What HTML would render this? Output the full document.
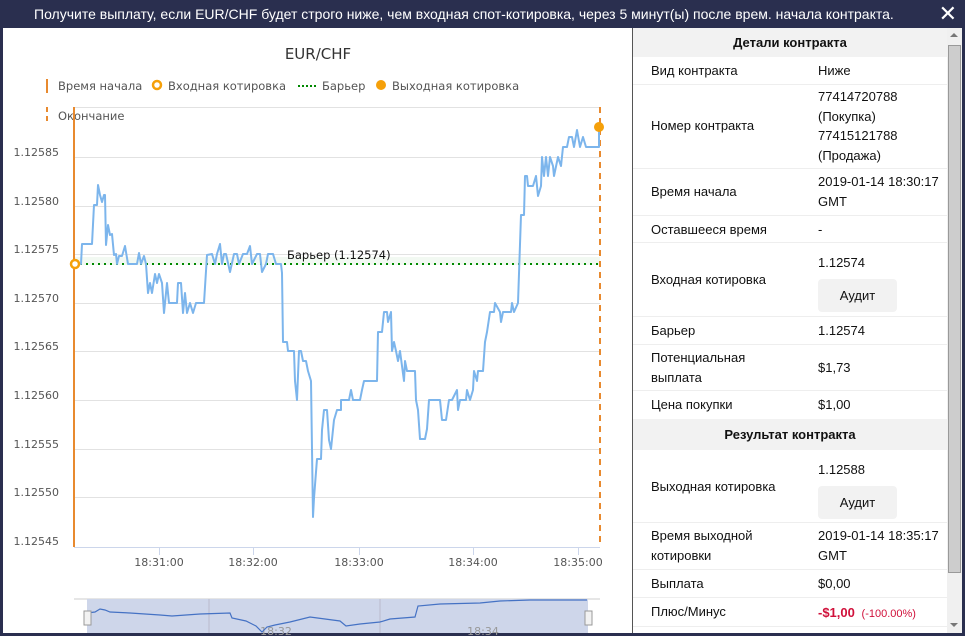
<!DOCTYPE html>
<html><head><meta charset="utf-8"><style>
*{margin:0;padding:0;box-sizing:border-box}
body{width:965px;height:636px;background:#2a2f4f;position:relative;overflow:hidden;font-family:"Liberation Sans",sans-serif}
#top{position:absolute;left:0;top:0;width:965px;height:28px;background:#2a2f4f;color:#fff;font-size:14px;line-height:28px;padding-left:34px;white-space:nowrap}
#close{position:absolute;right:8px;top:0;color:#fff;font-size:22px;line-height:28px}
#main{position:absolute;left:3px;top:28px;width:959px;height:605px;background:#fff}
#panel{position:absolute;left:632px;top:28px;width:315px;height:605px;border-left:1px solid #555;background:#fff;font-size:13px;color:#111}
.h{height:29px;background:#f2f2f2;text-align:center;font-weight:bold;line-height:29px}
.r{position:relative;border-bottom:1px solid #eee}
.r .l{position:absolute;left:18px}
.r .v{position:absolute;left:185px;line-height:19.5px}
.btn{display:block;width:79px;height:33px;background:#f2f2f2;border-radius:4px;text-align:center;line-height:33px;margin-top:6px}
#sb{position:absolute;left:947px;top:28px;width:15px;height:605px;background:#f0f0f0}
#sbt{position:absolute;left:1px;top:17px;width:13px;height:528px;background:#cdcdcd;border:1px solid #999}
</style></head><body>
<div id="top">Получите выплату, если EUR/CHF будет строго ниже, чем входная спот-котировка, через 5 минут(ы) после врем. начала контракта.<span id="close">✕</span></div>
<div id="main"></div>
<svg style="position:absolute;left:0;top:0" width="632" height="636">
<text x="318" y="59" font-family="DejaVu Sans" font-size="15" fill="#333" text-anchor="middle">EUR/CHF</text>
<g font-family="DejaVu Sans" font-size="11.5" fill="#555">
<rect x="46" y="79" width="2" height="14" fill="#e88a2f"/><text x="58" y="90">Время начала</text>
<circle cx="157" cy="85" r="4" fill="none" stroke="#f5a00a" stroke-width="2.5"/><text x="168" y="90">Входная котировка</text>
<line x1="298" y1="86" x2="316" y2="86" stroke="#080" stroke-width="2" stroke-dasharray="2,2"/><text x="322" y="90">Барьер</text>
<circle cx="381" cy="85" r="5" fill="#f5a00a"/><text x="392" y="90">Выходная котировка</text>
<line x1="47" y1="107" x2="47" y2="124" stroke="#e88a2f" stroke-width="2" stroke-dasharray="5,4"/><text x="58" y="120">Окончание</text>
</g>
<g stroke="#e2e2e2" stroke-width="1">
<line x1="74" y1="107.5" x2="600" y2="107.5"/><line x1="74" y1="157.5" x2="600" y2="157.5"/><line x1="74" y1="206.5" x2="600" y2="206.5"/><line x1="74" y1="254.5" x2="600" y2="254.5"/><line x1="74" y1="303.5" x2="600" y2="303.5"/><line x1="74" y1="351.5" x2="600" y2="351.5"/><line x1="74" y1="400.5" x2="600" y2="400.5"/><line x1="74" y1="449.5" x2="600" y2="449.5"/><line x1="74" y1="497.5" x2="600" y2="497.5"/>
</g>
<line x1="74" y1="547.5" x2="600" y2="547.5" stroke="#ccd6eb"/>
<g stroke="#ccd6eb"><line x1="159.5" y1="547" x2="159.5" y2="555"/><line x1="253.5" y1="547" x2="253.5" y2="555"/><line x1="359.5" y1="547" x2="359.5" y2="555"/><line x1="473.5" y1="547" x2="473.5" y2="555"/><line x1="578.5" y1="547" x2="578.5" y2="555"/></g>
<g font-family="DejaVu Sans" font-size="11" fill="#555" text-anchor="end">
<text x="59" y="156">1.12585</text><text x="59" y="205">1.12580</text><text x="59" y="253">1.12575</text><text x="59" y="302">1.12570</text><text x="59" y="350">1.12565</text><text x="59" y="399">1.12560</text><text x="59" y="448">1.12555</text><text x="59" y="496">1.12550</text><text x="59" y="545">1.12545</text>
</g>
<g font-family="DejaVu Sans" font-size="11" fill="#555" text-anchor="middle">
<text x="159" y="566">18:31:00</text><text x="253" y="566">18:32:00</text><text x="359" y="566">18:33:00</text><text x="473" y="566">18:34:00</text><text x="578" y="566">18:35:00</text>
</g>
<rect x="74" y="257" width="526" height="8" fill="#eaf5ea" opacity=".6"/>
<line x1="74" y1="264" x2="600" y2="264" stroke="#080" stroke-width="2" stroke-dasharray="2,4"/>
<text x="287" y="259" font-family="DejaVu Sans" font-size="11.5" fill="#111">Барьер (1.12574)</text>
<line x1="74" y1="107" x2="74" y2="547" stroke="#e88a2f" stroke-width="2"/>
<line x1="600" y1="107" x2="600" y2="547" stroke="#e88a2f" stroke-width="2" stroke-dasharray="6,5"/>
<polyline fill="none" stroke="#7cb5ec" stroke-width="2" stroke-linejoin="round" points="74,264 81,264 82,244 92,244 94,205 97,205 98,185 100,195 102,202 104,195 105,195 106,245 108,225 110,235 112,234 114,255 116,254 117,264 119,256 122,256 125,246 128,264 137,264 139,253 141,264 144,256 146,264 148,293 150,283 152,293 155,274 157,283 159,274 162,283 164,313 167,283 169,303 177,303 178,283 181,283 183,313 185,293 187,313 190,303 193,313 196,303 204,303 207,255 212,254 215,264 217,254 220,244 222,264 224,254 226,254 230,272 234,254 237,254 239,264 243,254 247,254 250,246 252,264 257,254 260,254 262,272 266,264 268,254 270,254 273,254 276,264 281,264 282,273 283,342 287,342 288,351 294,351 295,381 297,400 299,351 301,351 303,361 306,361 308,371 311,381 313,517 314,498 317,459 321,459 322,430 324,410 327,410 329,440 331,449 334,420 337,410 341,410 341,400 349,400 351,390 353,400 360,400 362,390 364,381 377,381 378,332 382,332 384,312 387,312 388,322 391,312 392,351 394,342 396,351 398,361 400,351 404,381 405,361 407,371 415,371 416,400 418,410 420,439 425,439 427,429 429,400 440,400 442,420 446,420 449,400 452,400 457,390 458,410 460,400 466,400 467,390 470,400 473,390 474,371 477,381 478,371 483,371 485,342 487,332 490,312 494,312 495,303 500,312 501,322 503,312 511,312 512,303 514,312 518,303 521,215 524,215 525,176 527,176 528,186 533,186 536,176 538,196 541,186 542,157 544,176 546,157 548,176 550,157 553,166 554,176 558,157 561,166 563,147 567,147 569,137 572,137 574,147 577,130 580,147 583,137 586,147 599,147 599,127"/>
<circle cx="75" cy="264" r="4" fill="#fff" stroke="#f5a00a" stroke-width="2.5"/>
<circle cx="599" cy="127" r="5" fill="#f5a00a"/>
<line x1="74" y1="599" x2="600" y2="599" stroke="#ccc"/>
<rect x="87" y="599" width="501" height="34" fill="#ced6ea"/>
<line x1="209" y1="599" x2="209" y2="633" stroke="#bbc"/><line x1="380" y1="599" x2="380" y2="633" stroke="#bbc"/>
<text x="276" y="635" font-family="DejaVu Sans" font-size="11" fill="#999" text-anchor="middle">18:32</text>
<text x="483" y="635" font-family="DejaVu Sans" font-size="11" fill="#999" text-anchor="middle">18:34</text>
<polyline fill="none" stroke="#4572c4" stroke-width="1.2" points="87,613 95,612 100,609 105,610 110,612 130,613 160,615 172,616 200,614 230,613 232,618 246,621 256,626 262,632 267,627 275,625 290,622 310,617 340,621 346,626 360,624 380,622 390,619 415,617 418,606 440,604 480,603 500,601 530,600 587,600"/>
<rect x="84" y="611" width="7" height="14" fill="#f2f2f2" stroke="#999"/>
<rect x="585" y="611" width="7" height="14" fill="#f2f2f2" stroke="#999"/>
</svg>
<div id="panel">
<div class="h">Детали контракта</div>
<div class="r" style="height:28px"><span class="l" style="top:6px">Вид контракта</span><span class="v" style="top:4px">Ниже</span></div>
<div class="r" style="height:84px"><span class="l" style="top:33px">Номер контракта</span><span class="v" style="top:2px">77414720788<br>(Покупка)<br>77415121788<br>(Продажа)</span></div>
<div class="r" style="height:47px"><span class="l" style="top:15px">Время начала</span><span class="v" style="top:3px">2019-01-14 18:30:17<br>GMT</span></div>
<div class="r" style="height:27px"><span class="l" style="top:6px">Оставшееся время</span><span class="v" style="top:4px">-</span></div>
<div class="r" style="height:74px"><span class="l" style="top:29px">Входная котировка</span><span class="v" style="top:10px">1.12574<span class="btn">Аудит</span></span></div>
<div class="r" style="height:28px"><span class="l" style="top:6px">Барьер</span><span class="v" style="top:4px">1.12574</span></div>
<div class="r" style="height:46px"><span class="l" style="top:3px;line-height:19.5px">Потенциальная<br>выплата</span><span class="v" style="top:13px">$1,73</span></div>
<div class="r" style="height:28px;border:0"><span class="l" style="top:6px">Цена покупки</span><span class="v" style="top:4px">$1,00</span></div>
<div class="h" style="height:31px;line-height:31px">Результат контракта</div>
<div class="r" style="height:73px"><span class="l" style="top:29px">Выходная котировка</span><span class="v" style="top:10px">1.12588<span class="btn">Аудит</span></span></div>
<div class="r" style="height:47px"><span class="l" style="top:3px;line-height:19.5px">Время выходной<br>котировки</span><span class="v" style="top:3px">2019-01-14 18:35:17<br>GMT</span></div>
<div class="r" style="height:28px"><span class="l" style="top:6px">Выплата</span><span class="v" style="top:4px">$0,00</span></div>
<div class="r" style="height:29px"><span class="l" style="top:6px">Плюс/Минус</span><span class="v" style="top:5px;color:#d0103a"><b>-$1,00</b> <span style="font-size:11px">&nbsp;(-100.00%)</span></span></div>
</div>
<div id="sb"><div style="position:absolute;left:3px;top:5px;border:4px solid transparent;border-bottom:4px solid #777;border-top:0;width:0"></div><div id="sbt"></div><div style="position:absolute;left:3px;bottom:6px;border:4px solid transparent;border-top:4px solid #777;border-bottom:0"></div></div>
</body></html>
